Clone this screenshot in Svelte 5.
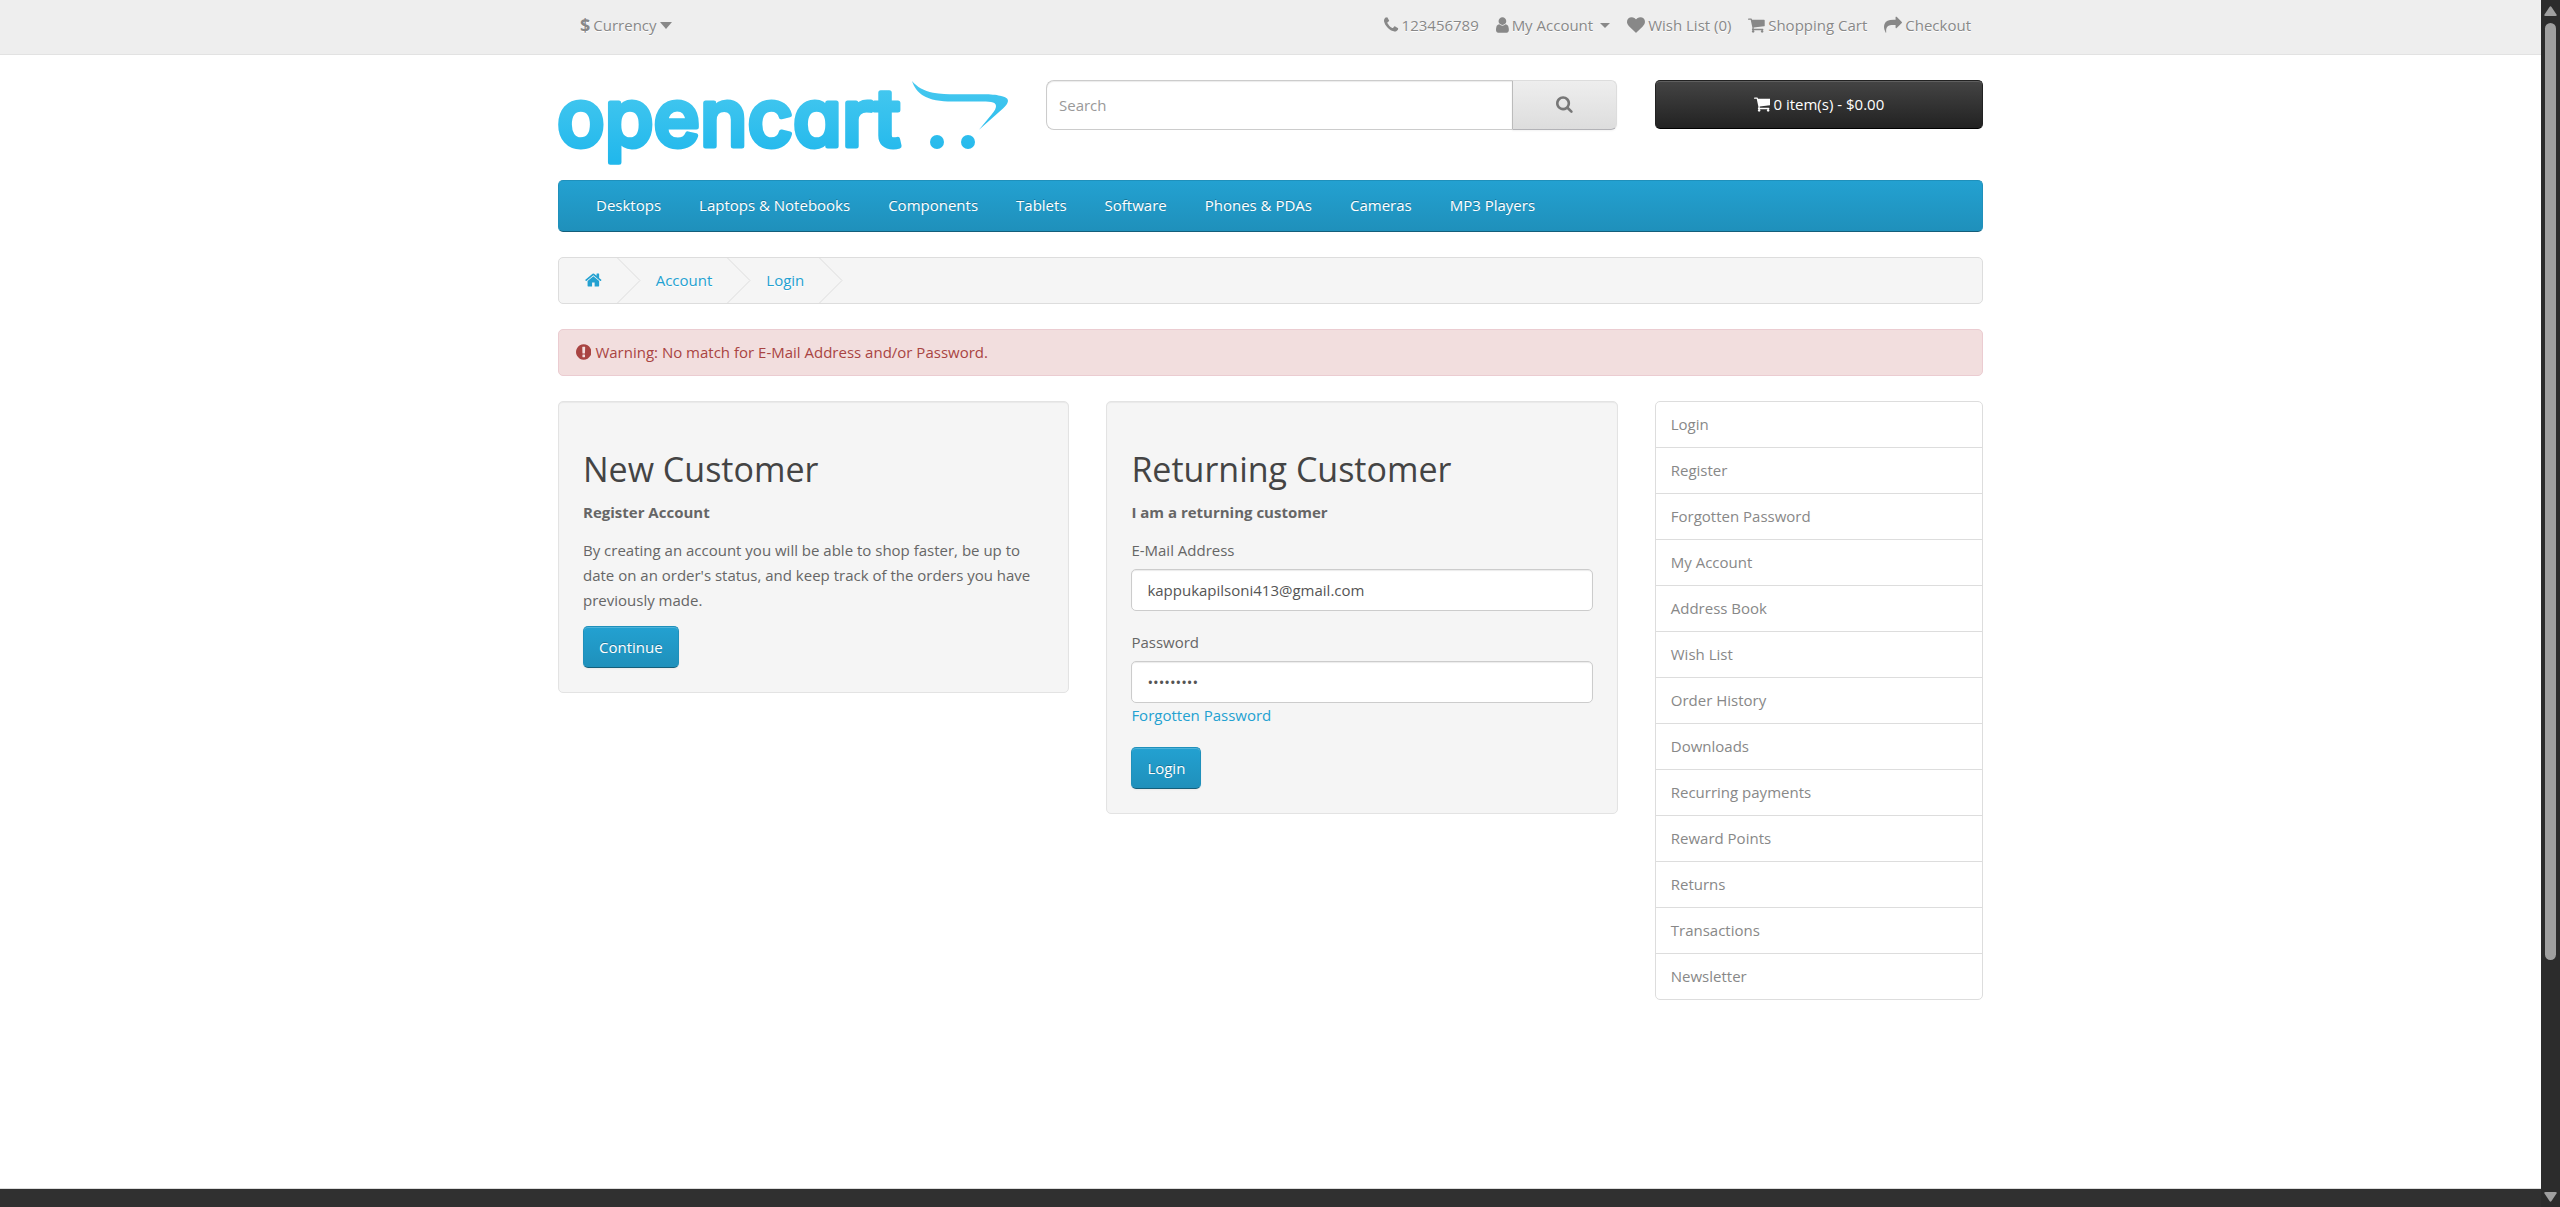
<script>
  const icons = {
    phone: {
      box: '192 0 1408 1792',
      path: 'M1600 1240q0 27-10 70.5t-21 68.5q-21 50-122 106-94 51-186 51-27 0-53-3.5t-57.5-12.5-47-14.5-55.5-20.5-49-18q-98-35-175-83-127-79-264-216t-216-264q-48-77-83-175-3-9-18-49t-20.5-55.5-14.5-47-12.5-57.5-3.5-53q0-92 51-186 56-101 106-122 25-11 68.5-21t70.5-10q14 0 21 3 18 6 53 76 11 19 30 54t35 63.5 31 53.5q3 4 17.5 25t21.5 35.5 7 28.5q0 20-28.5 50t-62 55-62 53-28.5 46q0 9 5 22.5t8.5 20.5 14 24 11.5 19q76 137 174 235t235 174q2 1 19 11.5t24 14 20.5 8.5 22.5 5q18 0 46-28.5t53-62 55-62 50-28.5q14 0 28.5 7t35.5 21.5 25 17.5q25 15 53.5 31t63.5 35 54 30q70 35 76 53 3 7 3 21z'
    },
    user: {
      box: '256 0 1280 1792',
      path: 'M1536 1399q0 109-62.5 187t-150.5 78h-854q-88 0-150.5-78t-62.5-187q0-85 8.5-160.5t31.5-152 58.5-131 94-89 134.5-34.5q131 128 313 128t313-128q76 0 134.5 34.5t94 89 58.5 131 31.5 152 8.5 160.5zm-256-887q0 159-112.5 271.5t-271.5 112.5-271.5-112.5-112.5-271.5 112.5-271.5 271.5-112.5 271.5 112.5 112.5 271.5z'
    },
    heart: {
      box: '0 0 1792 1792',
      path: 'M896 1664q-26 0-44-18l-624-602q-10-8-27.5-26t-55.5-65.5-68-97.5-53.5-121-23.5-138q0-220 127-344t351-124q62 0 126.5 21.5t120 58 95.5 68.5 76 68q36-36 76-68t95.5-68.5 120-58 126.5-21.5q224 0 351 124t127 344q0 221-229 450l-623 600q-18 18-44 18z'
    },
    cart: {
      box: '64 0 1664 1792',
      path: 'M704 1536q0 52-38 90t-90 38-90-38-38-90 38-90 90-38 90 38 38 90zm896 0q0 52-38 90t-90 38-90-38-38-90 38-90 90-38 90 38 38 90zm128-1088v512q0 24-16.5 42.5t-40.5 21.5l-1044 122q13 60 13 70 0 16-24 64h920q26 0 45 19t19 45-19 45-45 19h-1024q-26 0-45-19t-19-45q0-11 8-31.5t16-36 21.5-40 15.5-29.5l-177-823h-204q-26 0-45-19t-19-45 19-45 45-19h256q16 0 28.5 6.5t19.5 15.5 13 24.5 8 26 5.5 29.5 4.5 26h1201q26 0 45 19t19 45z'
    },
    share: {
      box: '0 0 1792 1792',
      path: 'M1792 640q0 26-19 45l-512 512q-19 19-45 19t-45-19-19-45v-256h-224q-98 0-175.5 6t-154 21.5-133 42.5-105.5 69.5-80 101-48.5 138.5-17.5 181q0 55 5 123 0 6 2.5 23.5t2.5 26.5q0 15-8.5 25t-23.5 10q-16 0-28-17-7-9-13-22t-13.5-30-10.5-24q-127-285-127-451 0-199 53-333 162-403 875-403h224v-256q0-26 19-45t45-19 45 19l512 512q19 19 19 45z'
    },
    search: {
      box: '64 0 1664 1792',
      path: 'M1216 832q0-185-131.5-316.5t-316.5-131.5-316.5 131.5-131.5 316.5 131.5 316.5 316.5 131.5 316.5-131.5 131.5-316.5zm512 832q0 52-38 90t-90 38q-54 0-90-38l-343-342q-179 124-399 124-143 0-273.5-55.5t-225-150-150-225-55.5-273.5 55.5-273.5 150-225 225-150 273.5-55.5 273.5 55.5 225 150 150 225 55.5 273.5q0 220-124 399l343 343q37 37 37 90z'
    },
    home: {
      box: '64 0 1664 1792',
      path: 'M1472 992v480q0 26-19 45t-45 19h-384v-384h-256v384h-384q-26 0-45-19t-19-45v-480q0-1 .5-3t.5-3l575-474 575 474q1 2 1 6zm223-69l-62 74q-8 9-21 11h-3q-13 0-21-7l-692-577-692 577q-12 8-24 7-13-2-21-11l-62-74q-8-10-7-23.5t11-21.5l719-599q32-26 76-26t76 26l244 204v-195q0-14 9-23t23-9h192q14 0 23 9t9 23v408l219 182q10 8 11 21.5t-7 23.5z'
    },
    warning: {
      box: '128 0 1536 1792',
      path: 'M896 128q209 0 385.5 103t279.5 279.5 103 385.5-103 385.5-279.5 279.5-385.5 103-385.5-103-279.5-279.5-103-385.5 103-385.5 279.5-279.5 385.5-103zm128 1247v-190q0-14-9-23.5t-22-9.5h-192q-13 0-23 10t-10 23v190q0 13 10 23t23 10h192q13 0 22-9.5t9-23.5zm-2-344l18-621q0-12-10-18-10-8-24-8h-220q-14 0-24 8-10 6-10 18l18 621q0 10 10 17.5t24 7.5h185q14 0 23.5-7.5t10.5-17.5z'
    }
  };

  const topLinks = [
    { icon: 'phone', label: '123456789' },
    { icon: 'user', label: 'My Account', menu: true },
    { icon: 'heart', label: 'Wish List (0)' },
    { icon: 'cart', label: 'Shopping Cart' },
    { icon: 'share', label: 'Checkout' }
  ];

  const categories = [
    'Desktops', 'Laptops & Notebooks', 'Components', 'Tablets',
    'Software', 'Phones & PDAs', 'Cameras', 'MP3 Players'
  ];

  const accountLinks = [
    'Login', 'Register', 'Forgotten Password', 'My Account', 'Address Book',
    'Wish List', 'Order History', 'Downloads', 'Recurring payments',
    'Reward Points', 'Returns', 'Transactions', 'Newsletter'
  ];

  let search = $state('');
  let email = $state('kappukapilsoni413@gmail.com');
  let password = $state('password1');
</script>

{#snippet icon(name)}
  <svg class="icon" viewBox={icons[name].box} aria-hidden="true"><path d={icons[name].path} /></svg>
{/snippet}

{#snippet chevron()}
  <svg class="chevron" viewBox="0 0 24 45" aria-hidden="true"><path d="M0.5 0L23 22.5L0.5 45" /></svg>
{/snippet}

<div class="window">
  <div class="page">
    <nav class="top" aria-label="Shop">
      <div class="container top-row">
        <button class="currency" type="button">
          <strong>$</strong>
          <span>Currency</span>
          <svg class="caret-large" viewBox="0 0 12 7" aria-hidden="true"><path d="M0 0h12L6 7z" /></svg>
        </button>
        <ul class="top-links">
          {#each topLinks as link}
            <li>
              <a href="#top">
                {@render icon(link.icon)}
                <span>{link.label}</span>
                {#if link.menu}
                  <svg class="caret" viewBox="0 0 10 5" aria-hidden="true"><path d="M0 0h10L5 5z" /></svg>
                {/if}
              </a>
            </li>
          {/each}
        </ul>
      </div>
    </nav>

    <header class="container header">
      <a class="logo" href="#home">
        <svg viewBox="0 0 450 88">
          <defs>
            <linearGradient id="brand" gradientUnits="userSpaceOnUse" x1="0" y1="0" x2="0" y2="88">
              <stop offset="0.1" stop-color="#43c7ef" />
              <stop offset="0.9" stop-color="#22b8ec" />
            </linearGradient>
          </defs>
          <text class="wordmark" x="-1" y="66">opencart</text>
          <path fill="url(#brand)" d="M354 1C359 7 366 11 375 12.700C384 14.500 393 14.300 402 14.300L425 14.200C433 14.200 438 14.700 442 15.700C448 17 450 18.500 450 21C449.500 24 448 25.500 445 28.500L421 49.700L434 34C437 30.500 438 28 438 26C438 23.500 436 22.500 433 22C430 21.500 426 21.500 422 21.500L394 21.500C383 21.500 372 20 365 15.500C360 12.500 356 7 354 1Z" />
          <circle fill="url(#brand)" cx="379" cy="62" r="7" />
          <circle fill="url(#brand)" cx="410" cy="62" r="7" />
        </svg>
      </a>
      <form class="search" onsubmit={(e) => e.preventDefault()}>
        <input type="text" placeholder="Search" aria-label="Search" bind:value={search} />
        <button type="submit" aria-label="Search">{@render icon('search')}</button>
      </form>
      <button class="cart" type="button">
        {@render icon('cart')}
        <span>0 item(s) - $0.00</span>
      </button>
    </header>

    <main class="container">
      <nav class="menu" aria-label="Categories">
        {#each categories as category}
          <a href="#category">{category}</a>
        {/each}
      </nav>

      <nav class="breadcrumb" aria-label="Breadcrumb">
        <a href="#home" aria-label="Home">{@render icon('home')}</a>
        {@render chevron()}
        <a href="#account">Account</a>
        {@render chevron()}
        <a href="#login">Login</a>
        {@render chevron()}
      </nav>

      <div class="alert" role="alert">
        {@render icon('warning')}
        <span>Warning: No match for E-Mail Address and/or Password.</span>
      </div>

      <div class="columns">
        <section class="well">
          <h2>New Customer</h2>
          <p><strong>Register Account</strong></p>
          <p>By creating an account you will be able to shop faster, be up to date on an order's status, and keep track of the orders you have previously made.</p>
          <a class="primary" href="#register">Continue</a>
        </section>

        <section class="well">
          <h2>Returning Customer</h2>
          <p><strong>I am a returning customer</strong></p>
          <form onsubmit={(e) => e.preventDefault()}>
            <div class="group">
              <label for="email">E-Mail Address</label>
              <input id="email" type="text" bind:value={email} />
            </div>
            <div class="group">
              <label for="password">Password</label>
              <input id="password" type="password" bind:value={password} />
              <a class="forgot" href="#forgotten">Forgotten Password</a>
            </div>
            <button class="primary" type="submit">Login</button>
          </form>
        </section>

        <aside>
          <ul class="list">
            {#each accountLinks as link}
              <li><a href="#account">{link}</a></li>
            {/each}
          </ul>
        </aside>
      </div>
    </main>

    <footer></footer>
  </div>

  <div class="scrollbar" aria-hidden="true">
    <svg viewBox="0 0 13 10"><path d="M5.500 1q1-1.500 2 0l5 7.500q.8 1.500-1 1.500h-10q-1.800 0-1-1.500z" /></svg>
    <div class="thumb"></div>
    <div class="rest"></div>
    <svg viewBox="0 0 13 10"><path d="M5.500 9q1 1.500 2 0l5-7.500q.8-1.500-1-1.500h-10q-1.800 0-1 1.500z" /></svg>
  </div>
</div>

<style>
  :global(body) {
    background: #fff;
    color: #666;
    font-family: 'Open Sans', 'Noto Sans', sans-serif;
    font-size: 15px;
    line-height: 25px;
  }

  * {
    box-sizing: border-box;
  }

  a {
    color: #23a1d1;
    text-decoration: none;
  }

  ul {
    margin: 0;
    padding: 0;
    list-style: none;
  }

  button,
  input {
    margin: 0;
    font: inherit;
  }

  button {
    cursor: pointer;
  }

  svg {
    display: block;
    flex: none;
  }

  .icon {
    height: 18px;
    width: auto;
    margin-bottom: 2px;
    fill: currentColor;
  }

  .window {
    display: flex;
    min-height: 100vh;
  }

  .page {
    flex: 1;
    min-width: 0;
    display: flex;
    flex-direction: column;
  }

  .container {
    width: 100%;
    max-width: 1425px;
    margin: 0 auto;
  }

  .top {
    border-bottom: 1px solid #e2e2e2;
    background: #eee;
    color: #888;
  }

  .top-row {
    display: flex;
    justify-content: space-between;
    padding: 13px 12px 16px 22px;
  }

  .currency {
    display: flex;
    align-items: center;
    gap: 3px;
    padding: 0;
    border: 0;
    background: none;
    color: #888;
    text-shadow: 0 1px 0 #fff;
  }

  .currency strong {
    font-size: 18px;
    line-height: 25px;
  }

  .caret-large {
    width: 12px;
    fill: currentColor;
  }

  .caret {
    width: 10px;
    margin-left: 4px;
    fill: currentColor;
  }

  .top-links {
    display: flex;
    gap: 17px;
  }

  .top-links a {
    display: flex;
    align-items: center;
    gap: 3px;
    color: #888;
    text-shadow: 0 1px 0 #fff;
  }

  .header {
    display: grid;
    grid-template-columns: 450fr 571fr 328fr;
    gap: 38px;
    align-items: start;
    padding: 25px 0 12px;
  }

  .logo svg {
    width: 100%;
    overflow: visible;
  }

  .wordmark {
    font-family: Inter, 'DejaVu Sans', sans-serif;
    font-size: 79px;
    font-weight: 500;
    font-feature-settings: 'cv11';
    fill: url(#brand);
    stroke: url(#brand);
    stroke-width: 5px;
    stroke-linejoin: round;
  }

  .search {
    display: flex;
  }

  .search input {
    flex: 1;
    min-width: 0;
    height: 50px;
    padding: 0 12px;
    border: 1px solid #ccc;
    border-right: 0;
    border-radius: 8px 0 0 8px;
    box-shadow: inset 0 1px 1px rgba(0, 0, 0, 0.08);
    color: #555;
  }

  .search input::placeholder {
    color: #999;
  }

  .search button {
    display: flex;
    align-items: center;
    justify-content: center;
    width: 105px;
    height: 50px;
    border: 1px solid;
    border-color: #ddd #ddd #b3b3b7 #bbb;
    border-radius: 0 6px 6px 0;
    background: linear-gradient(#eee, #ddd);
    box-shadow: 0 1px 2px rgba(0, 0, 0, 0.05);
    color: #777;
  }

  .cart {
    display: flex;
    align-items: center;
    justify-content: center;
    gap: 3px;
    height: 49px;
    border: 1px solid;
    border-color: #222 #222 #000;
    border-radius: 5px;
    background: linear-gradient(#444, #222);
    box-shadow: inset 0 1px 0 rgba(255, 255, 255, 0.15);
    color: #fff;
  }

  main {
    flex: 1;
    padding-bottom: 180px;
  }

  .menu {
    display: flex;
    flex-wrap: wrap;
    gap: 38px;
    padding: 12px 37px 13px;
    border: 1px solid;
    border-color: #1f90bb #1f90bb #145e7a;
    border-radius: 5px;
    background: linear-gradient(#23a1d1, #1f90bb);
  }

  .menu a {
    color: #fff;
    text-shadow: 0 -1px 0 rgba(0, 0, 0, 0.25);
  }

  .breadcrumb {
    display: flex;
    align-items: center;
    gap: 15px;
    margin-top: 25px;
    padding: 0 26px;
    border: 1px solid #ddd;
    border-radius: 5px;
    background: #f5f5f5;
    overflow: hidden;
  }

  .breadcrumb a {
    text-shadow: 0 1px 0 #fff;
  }

  .chevron {
    width: 24px;
    height: 45px;
    fill: none;
    stroke: #ddd;
  }

  .alert {
    display: flex;
    align-items: center;
    gap: 4px;
    margin: 25px 0;
    padding: 10px 17px;
    border: 1px solid #ebccd1;
    border-radius: 5px;
    background: #f2dede;
    color: #a94442;
  }

  .columns {
    display: grid;
    grid-template-columns: 511fr 511fr 328fr;
    column-gap: 37px;
    align-items: start;
  }

  .well {
    padding: 24px;
    border: 1px solid #e3e3e3;
    border-radius: 5px;
    background: #f5f5f5;
    box-shadow: inset 0 1px 1px rgba(0, 0, 0, 0.05);
  }

  h2 {
    margin: 25px 0 12px;
    color: #444;
    font-size: 34px;
    font-weight: 400;
    line-height: 37px;
  }

  p {
    margin: 0 0 13px;
  }

  .group {
    margin-bottom: 19px;
  }

  .group label {
    display: block;
    margin-bottom: 6px;
  }

  .group input {
    display: block;
    width: 100%;
    height: 42px;
    padding: 0 15px;
    border: 1px solid #ccc;
    border-radius: 5px;
    background: #fff;
    box-shadow: inset 0 1px 1px rgba(0, 0, 0, 0.08);
    color: #555;
  }

  .forgot {
    display: block;
  }

  .primary {
    display: inline-block;
    height: 42px;
    padding: 0 15px;
    border: 1px solid;
    border-color: #1f90bb #1f90bb #145e7a;
    border-radius: 5px;
    background: linear-gradient(#23a1d1, #1f90bb);
    box-shadow: inset 0 1px 0 rgba(255, 255, 255, 0.2), 0 1px 2px rgba(0, 0, 0, 0.05);
    color: #fff;
    line-height: 40px;
    text-shadow: 0 -1px 0 rgba(0, 0, 0, 0.25);
    vertical-align: top;
  }

  .list {
    border: 1px solid #ddd;
    border-radius: 5px;
  }

  .list li + li {
    border-top: 1px solid #ddd;
  }

  .list a {
    display: block;
    padding: 10px 15px;
    color: #888;
  }

  footer {
    height: 19px;
    border-top: 1px solid #ddd;
    background: #303030;
  }

  .scrollbar {
    display: flex;
    flex-direction: column;
    align-items: center;
    width: 19px;
    padding: 6px 0 5px;
    background: #2c2c2c;
  }

  .scrollbar svg {
    width: 13px;
    height: 10px;
    fill: #9f9f9f;
  }

  .thumb {
    flex: 937;
    width: 11px;
    margin-top: 7px;
    border-radius: 6px;
    background: #9f9f9f;
  }

  .rest {
    flex: 232;
  }
</style>
